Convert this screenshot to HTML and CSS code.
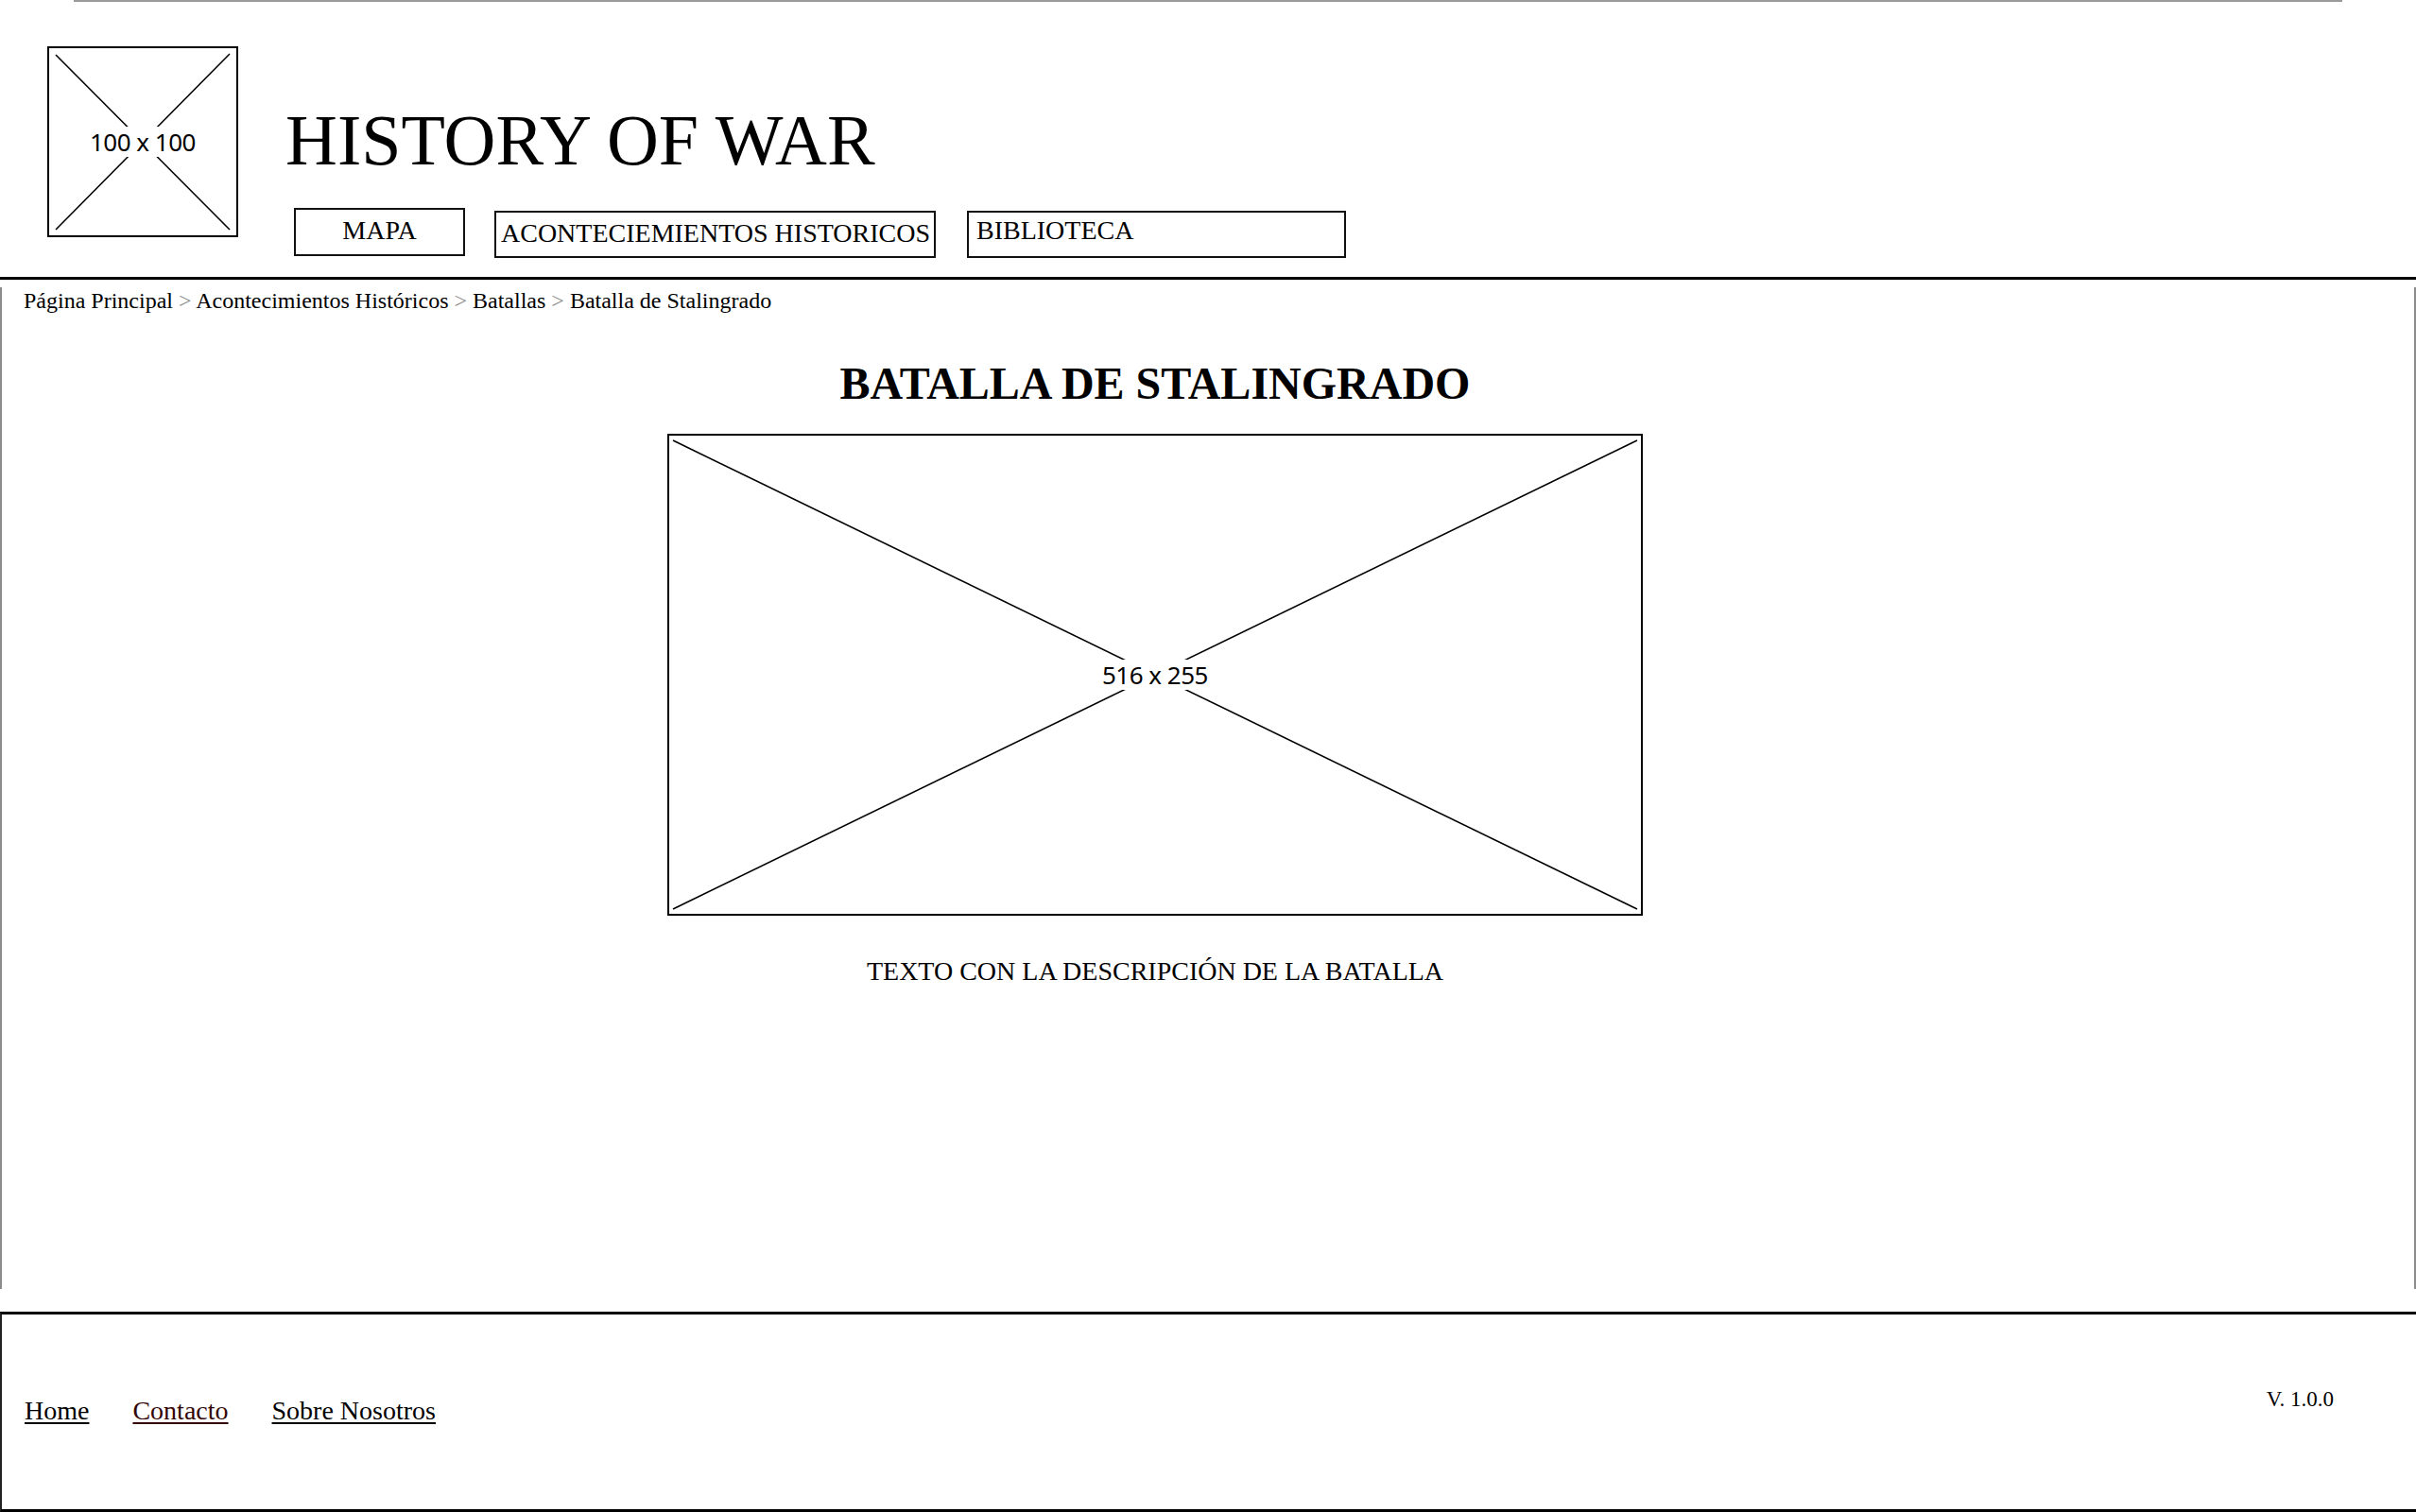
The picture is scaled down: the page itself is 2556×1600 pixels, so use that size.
FILE: index.html
```html
<!DOCTYPE html>
<html lang="es">
<head>
<meta charset="utf-8">
<title>History of War - Batalla de Stalingrado</title>
<link rel="stylesheet" href="styles.css">
</head>
<body>
<header class="site-header">
  <div class="top-line"></div>
  <div class="header-row">
    <div class="logo placeholder">
      <svg class="ph-x" viewBox="0 0 198 198" preserveAspectRatio="none">
        <line x1="7" y1="7" x2="191" y2="192" />
        <line x1="191" y1="6" x2="7" y2="192" />
      </svg>
      <span class="ph-label logo-label">100 x 100</span>
    </div>
    <div class="header-main">
      <h1 class="site-title">HISTORY OF WAR</h1>
      <nav class="main-nav">
        <a class="nav-btn nav-mapa">MAPA</a>
        <a class="nav-btn nav-acont">ACONTECIEMIENTOS HISTORICOS</a>
        <a class="nav-btn nav-bibl">BIBLIOTECA</a>
      </nav>
    </div>
  </div>
</header>

<main class="content">
  <div class="frame">
    <div class="breadcrumb">Página Principal <span class="sep">&gt;</span> Acontecimientos Históricos <span class="sep">&gt;</span> Batallas <span class="sep">&gt;</span> Batalla de Stalingrado</div>
    <section class="article">
      <h2 class="article-title">BATALLA DE STALINGRADO</h2>
      <div class="hero placeholder">
        <svg class="ph-x" viewBox="0 0 1028 506" preserveAspectRatio="none">
          <line x1="4" y1="5" x2="1024" y2="501" />
          <line x1="1024" y1="5" x2="4" y2="501" />
        </svg>
        <span class="ph-label hero-label">516 x 255</span>
      </div>
      <p class="article-text">TEXTO CON LA DESCRIPCIÓN DE LA BATALLA</p>
    </section>
  </div>
</main>

<footer class="site-footer">
  <nav class="footer-links">
    <a class="flink" href="#">Home</a>
    <a class="flink visited" href="#">Contacto</a>
    <a class="flink" href="#">Sobre Nosotros</a>
  </nav>
  <div class="version">V. 1.0.0</div>
</footer>
</body>
</html>
```

FILE: styles.css
```css
html, body {
  margin: 0;
  padding: 0;
  background: #fff;
}

body {
  width: 2556px;
  height: 1600px;
  overflow: hidden;
  font-family: "Liberation Serif", "Times New Roman", serif;
  color: #000;
}

/* ---------- header ---------- */
.site-header {
  height: 296px;
  box-sizing: border-box;
  border-bottom: 3px solid #000;
}

.top-line {
  margin: 0 78px;
  height: 0;
  border-top: 2px solid #9a9a9a;
}

.header-row {
  display: flex;
  align-items: flex-start;
  padding-left: 50px;
  padding-top: 47px;
  gap: 50px;
}

.placeholder {
  position: relative;
  box-sizing: border-box;
  border: 2px solid #000;
  background: #fff;
  display: flex;
  align-items: center;
  justify-content: center;
}

.ph-x {
  position: absolute;
  inset: 0;
  width: 100%;
  height: 100%;
}

.ph-x line {
  stroke: #000;
  stroke-width: 1.6;
}

.ph-label {
  position: relative;
  font-family: "Noto Sans", "DejaVu Sans", sans-serif;
  background: #fff;
  color: #000;
  line-height: 1;
  padding: 3px 6px;
  letter-spacing: -0.5px;
}

.logo {
  width: 202px;
  height: 202px;
  flex: none;
}

.logo-label {
  font-size: 26px;
}

.header-main {
  display: flex;
  flex-direction: column;
  padding-top: 56px;
}

.site-title {
  margin: 0;
  font-size: 76px;
  line-height: 86px;
  font-weight: normal;
}

.main-nav {
  display: flex;
  align-items: flex-start;
  margin-top: 29px;
  margin-left: 9px;
}

.nav-btn {
  box-sizing: border-box;
  display: block;
  height: 51px;
  border: 2px solid #111;
  font-size: 28px;
  line-height: 32px;
  padding-top: 5px;
  color: #000;
  text-decoration: none;
  white-space: nowrap;
}

.nav-mapa {
  width: 181px;
  text-align: center;
  padding-top: 6px;
}

.nav-acont {
  width: 467px;
  margin-left: 31px;
  margin-top: 3px;
  height: 50px;
  padding-left: 5px;
  padding-top: 6px;
}

.nav-bibl {
  width: 401px;
  margin-left: 33px;
  margin-top: 3px;
  height: 50px;
  padding-left: 8px;
  padding-top: 3px;
}

/* ---------- main ---------- */
.content {
  height: 1092px;
  box-sizing: border-box;
  padding-top: 8px;
}

.frame {
  height: 1060px;
  box-sizing: border-box;
  border-left: 2px solid #8c8c8c;
  border-right: 2px solid #8c8c8c;
}

.breadcrumb {
  font-size: 24px;
  line-height: 28px;
  padding-left: 23px;
  white-space: nowrap;
}

.sep {
  color: #8a8a8a;
}

.article {
  display: flex;
  flex-direction: column;
  align-items: center;
  padding-right: 112px;
}

.article-title {
  margin: 46px 0 0;
  font-size: 48px;
  line-height: 55px;
  font-weight: bold;
}

.hero {
  width: 1032px;
  height: 510px;
  margin-top: 26px;
}

.hero-label {
  font-size: 26px;
}

.article-text {
  margin: 43px 0 0;
  font-size: 28px;
  line-height: 32px;
}

/* ---------- footer ---------- */
.site-footer {
  height: 212px;
  box-sizing: border-box;
  border-top: 3px solid #000;
  border-bottom: 3px solid #000;
  border-left: 2px solid #222;
  display: flex;
  align-items: center;
  justify-content: space-between;
  padding-left: 24px;
  padding-right: 87px;
}

.footer-links {
  display: flex;
  gap: 46px;
  margin-bottom: 2px;
}

.flink {
  font-size: 28px;
  line-height: 32px;
  color: #000;
  text-decoration: underline;
  text-underline-offset: 3px;
  text-decoration-thickness: 2px;
}

.flink.visited {
  color: #330505;
}

.version {
  font-size: 23px;
  line-height: 26px;
  margin-bottom: 27px;
}
```
